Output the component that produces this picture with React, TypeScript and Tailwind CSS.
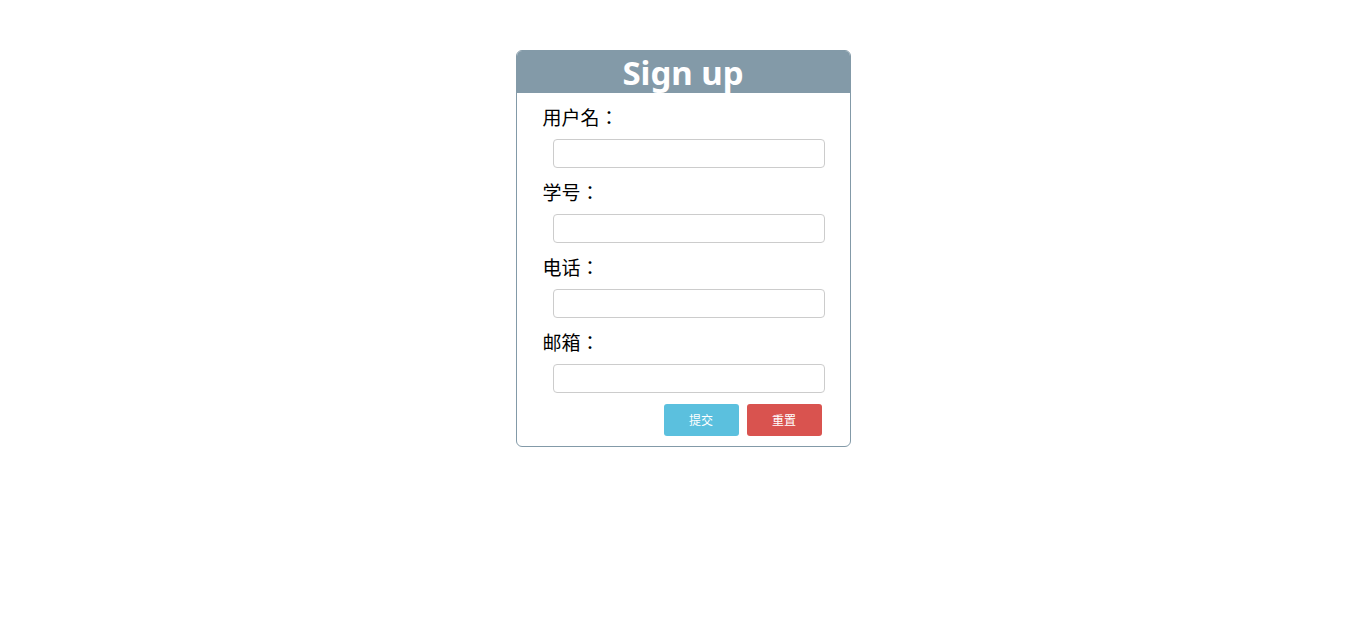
import React from "react";

const fields = ["用户名：", "学号：", "电话：", "邮箱："];

export default function App() {
  return (
    <div className="min-h-[643px] bg-white pt-[50px]" style={{ fontFamily: '"Noto Sans", "Noto Sans CJK SC", sans-serif' }}>
      <div className="mx-auto w-[335px] rounded-[6px] border border-[#839aa8] pb-[10px]">
        <div className="h-[42px] rounded-t-[5px] bg-[#839aa8] text-center text-[33px] font-bold leading-[44px] text-white">
          Sign up
        </div>
        <div className="pl-[26px] pr-[24px]">
          {fields.map((f) => (
            <div key={f}>
              <div className="mt-[10px] text-[19px] leading-[28px] text-black" style={{ fontFamily: '"Noto Sans CJK TC", "Noto Sans CJK SC", sans-serif' }}>
                {f}
              </div>
              <input
                type="text"
                className="ml-[10px] mt-[8px] block h-[29px] w-[272px] rounded-[4px] border border-[#cccccc] bg-white outline-none"
              />
            </div>
          ))}
          <div className="mt-[11px] flex justify-end gap-[8px] pr-[4px]">
            <button className="h-[32px] w-[75px] rounded-[3px] bg-[#5bc0de] text-[12px] text-white" style={{ fontFamily: '"Noto Sans CJK SC", sans-serif' }}>
              提交
            </button>
            <button className="h-[32px] w-[75px] rounded-[3px] bg-[#d9534f] text-[12px] text-white" style={{ fontFamily: '"Noto Sans CJK SC", sans-serif' }}>
              重置
            </button>
          </div>
        </div>
      </div>
    </div>
  );
}
